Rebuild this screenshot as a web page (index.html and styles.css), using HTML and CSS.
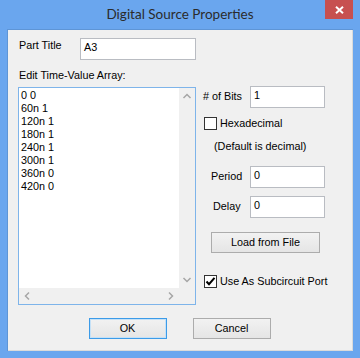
FILE: index.html
```html
<!DOCTYPE html>
<html>
<head>
<meta charset="utf-8">
<link rel="stylesheet" href="styles.css">
</head>
<body>
<div class="window">
  <div class="titlebar">
    <span class="title">Digital Source Properties</span>
    <div class="close">
      <svg width="9" height="8" viewBox="0 0 9 8"><path d="M1 0.8 L8 7.2 M8 0.8 L1 7.2" stroke="#fff" stroke-width="2"/></svg>
    </div>
  </div>
  <div class="client">
    <div class="main">
      <div class="left">
        <div class="row-title">
          <span class="lbl">Part Title</span>
          <div class="input wide">A3</div>
        </div>
        <div class="lbl array-lbl">Edit Time-Value Array:</div>
        <div class="listbox">
          <div class="text">0 0<br>60n 1<br>120n 1<br>180n 1<br>240n 1<br>300n 1<br>360n 0<br>420n 0</div>
          <div class="vscroll">
            <svg class="arrow" width="16" height="16" viewBox="0 0 16 16"><path d="M4.5 10 L8 6.5 L11.5 10" fill="none" stroke="#a6a6a6" stroke-width="1.5"/></svg>
            <svg class="arrow" width="16" height="16" viewBox="0 0 16 16"><path d="M4.5 6 L8 9.5 L11.5 6" fill="none" stroke="#a6a6a6" stroke-width="1.5"/></svg>
          </div>
          <div class="hscroll">
            <svg class="arrow" width="16" height="16" viewBox="0 0 16 16"><path d="M10 4.5 L6.5 8 L10 11.5" fill="none" stroke="#a6a6a6" stroke-width="1.5"/></svg>
            <svg class="arrow" width="16" height="16" viewBox="0 0 16 16"><path d="M6 4.5 L9.5 8 L6 11.5" fill="none" stroke="#a6a6a6" stroke-width="1.5"/></svg>
          </div>
          <div class="corner"></div>
        </div>
      </div>
      <div class="right">
        <div class="field bits">
          <span class="lbl">#&nbsp;of Bits</span>
          <div class="input">1</div>
        </div>
        <label class="check hex">
          <span class="box"></span>
          <span class="lbl">Hexadecimal</span>
        </label>
        <div class="lbl note">(Default is decimal)</div>
        <div class="field period">
          <span class="lbl">Period</span>
          <div class="input">0</div>
        </div>
        <div class="field delay">
          <span class="lbl">Delay</span>
          <div class="input">0</div>
        </div>
        <div class="btn load">Load from File</div>
        <label class="check sub">
          <span class="box"><svg width="11" height="11" viewBox="0 0 11 11"><path d="M1.5 5.5 L4 8.2 L9.5 1.8" fill="none" stroke="#000" stroke-width="2"/></svg></span>
          <span class="lbl">Use As Subcircuit Port</span>
        </label>
      </div>
    </div>
    <div class="footer">
      <div class="btn default">OK</div>
      <div class="btn">Cancel</div>
    </div>
  </div>
</div>
</body>
</html>
```

FILE: styles.css
```css
* { box-sizing: border-box; }
html, body { margin: 0; padding: 0; }
body {
  width: 360px;
  height: 358px;
  overflow: hidden;
  font-family: "Liberation Sans", Arial, sans-serif;
  font-size: 10.8px;
  color: #000;
}
.window {
  width: 360px;
  height: 358px;
  background: #6aa6ee;
  display: flex;
  flex-direction: column;
}
.titlebar {
  position: relative;
  height: 29px;
  display: flex;
  align-items: center;
  justify-content: center;
}
.title {
  font-family: Lato, "Noto Sans", sans-serif;
  font-size: 13.5px;
  color: #2b2b2b;
  margin-top: -1px;
}
.close {
  position: absolute;
  top: 0;
  right: 7px;
  width: 28px;
  height: 19px;
  background: #c75050;
  display: flex;
  align-items: center;
  justify-content: center;
}
.client {
  margin: 0 7px 7px;
  height: 322px;
  background: #f0f0f0;
  border: 1px solid #5e95d6;
  border-width: 1px 0 0 1px;
  box-shadow: inset -1px -1px 0 #dadada;
  display: flex;
  flex-direction: column;
}
.main {
  display: flex;
}
.left {
  margin-left: 10px;
  width: 178px;
  padding-top: 8px;
  display: flex;
  flex-direction: column;
}
.lbl {
  line-height: 13px;
  white-space: nowrap;
}
.row-title {
  display: flex;
  justify-content: space-between;
  height: 22px;
}
.row-title .lbl {
  margin-left: 1px;
  margin-top: 1px;
}
.input {
  width: 75px;
  height: 22px;
  background: #fff;
  border: 1px solid #b9bcc2;
  padding: 2px 0 0 3px;
  line-height: 13px;
}
.input.wide { width: 116px; }
.array-lbl {
  margin: 9px 0 0 1px;
}
.listbox {
  margin-top: 5px;
  width: 178px;
  height: 218px;
  border: 1px solid #7eb4ea;
  background: #fff;
  display: grid;
  grid-template-columns: 1fr 16px;
  grid-template-rows: 1fr 16px;
}
.text {
  padding: 1px 0 0 2px;
  line-height: 13px;
}
.vscroll {
  background: #f0f0f0;
  display: flex;
  flex-direction: column;
  justify-content: space-between;
}
.hscroll {
  background: #f0f0f0;
  display: flex;
  justify-content: space-between;
}
.corner { background: #f0f0f0; }
.arrow { display: block; }
.right {
  margin-left: 7px;
  width: 122px;
  padding-top: 56px;
  display: flex;
  flex-direction: column;
}
.field {
  display: flex;
  align-items: center;
  justify-content: space-between;
}
.field .lbl { margin-top: -1px; }
.period { margin-top: 13px; }
.period .lbl { margin-left: 8px; }
.delay { margin-top: 8px; }
.delay .lbl { margin-left: 10px; }
.check {
  display: flex;
  align-items: center;
  gap: 3px;
  margin-left: 1px;
}
.box {
  width: 13px;
  height: 13px;
  border: 1px solid #333;
  background: #fff;
  display: flex;
  align-items: center;
  justify-content: center;
}
.hex { margin-top: 9px; }
.note { margin: 10px 0 0 11px; }
.btn {
  width: 78px;
  height: 21px;
  border: 1px solid #acacac;
  background: linear-gradient(#f2f2f2, #e5e5e5);
  display: flex;
  align-items: center;
  justify-content: center;
  line-height: 13px;
}
.btn.load {
  width: 109px;
  margin: 14px 0 0 8px;
}
.btn.default { border-color: #3c9be8; box-shadow: inset 0 0 0 1px #c5e1f7; }
.sub { margin-top: 22px; }
.footer {
  margin-top: 13px;
  display: flex;
  justify-content: center;
  gap: 26px;
  padding-right: 2px;
}
```
